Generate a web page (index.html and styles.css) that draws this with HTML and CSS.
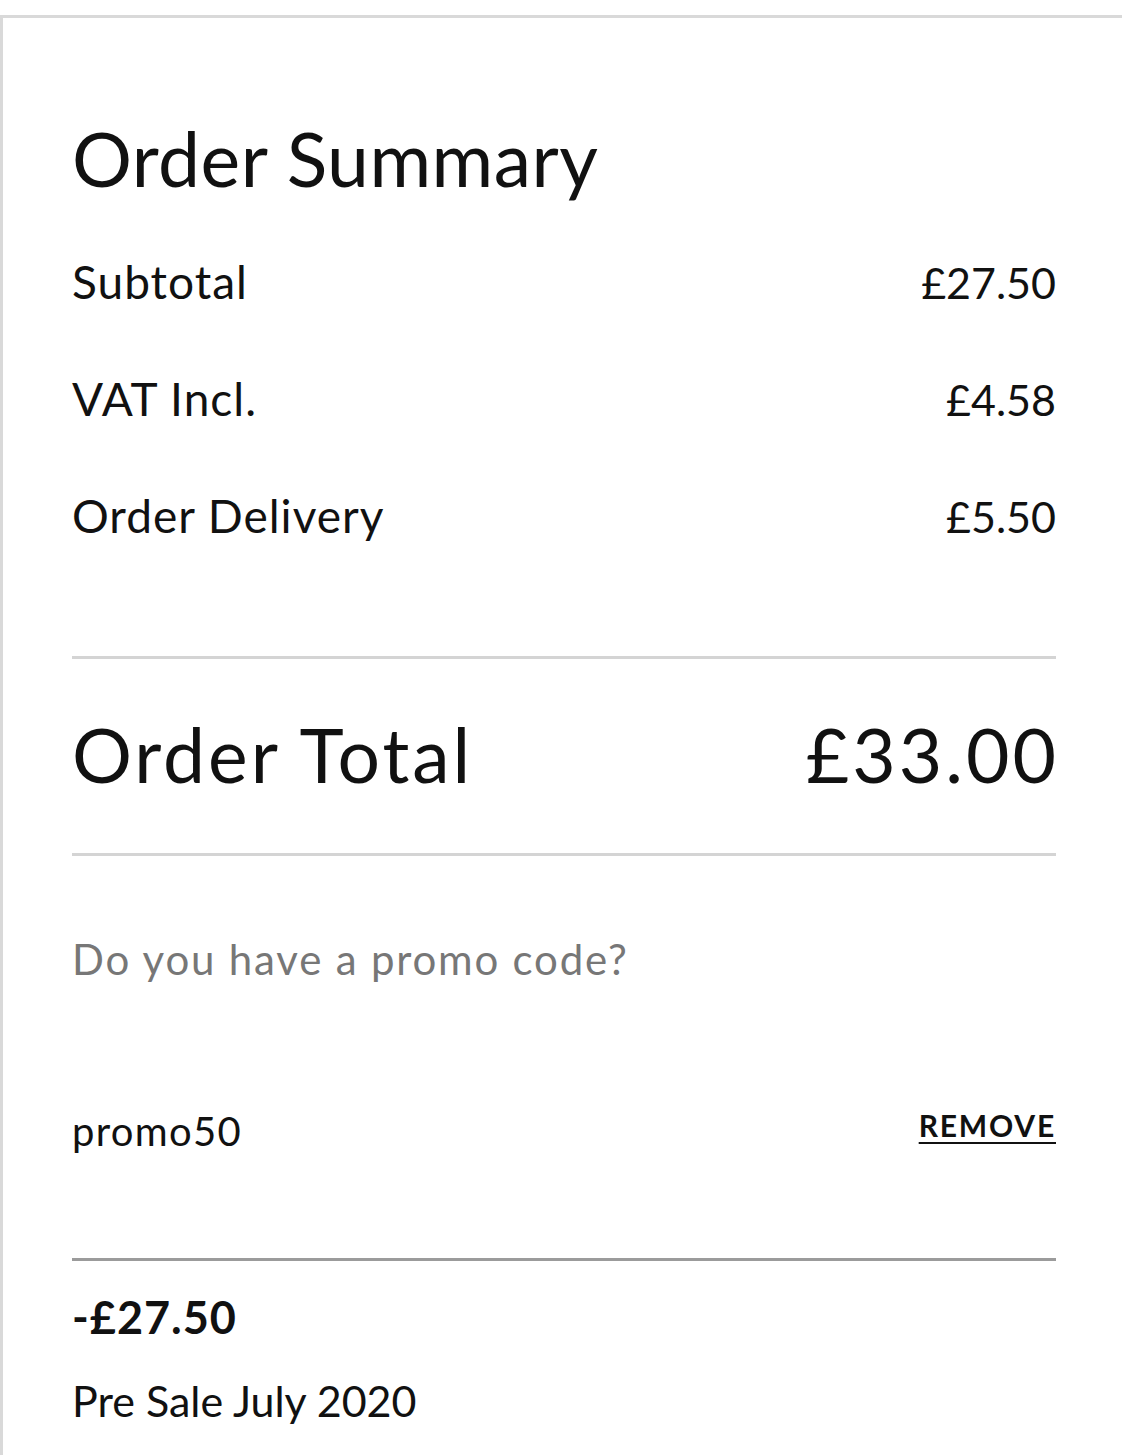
FILE: index.html
```html
<!DOCTYPE html>
<html lang="en">
<head>
    <meta charset="UTF-8">
    <meta name="viewport" content="width=device-width, initial-scale=1.0">
    <title>Order Summary</title>
    <link rel="stylesheet" href="styles.css">
</head>
<body>
    <div class="page">
        <div class="summary">
            <h1 class="summary-title">Order Summary</h1>

            <div class="lines">
                <div class="line">
                    <span class="line-label">Subtotal</span>
                    <span class="line-value">£27.50</span>
                </div>
                <div class="line">
                    <span class="line-label">VAT Incl.</span>
                    <span class="line-value">£4.58</span>
                </div>
                <div class="line">
                    <span class="line-label">Order Delivery</span>
                    <span class="line-value">£5.50</span>
                </div>
            </div>

            <hr class="rule">

            <div class="total">
                <span>Order Total</span>
                <span>£33.00</span>
            </div>

            <hr class="rule">

            <div class="promo-question">Do you have a promo code?</div>

            <div class="promo-applied">
                <span class="promo-code">promo50</span>
                <a href="#" class="promo-remove">Remove</a>
            </div>

            <hr class="rule rule-dark">

            <div class="discount">-£27.50</div>
            <div class="discount-note">Pre Sale July 2020</div>
        </div>
    </div>
</body>
</html>
```

FILE: styles.css
```css
* {
    margin: 0;
    padding: 0;
    box-sizing: border-box;
}

body {
    font-family: Lato, 'Open Sans', sans-serif;
    background: #ffffff;
    color: #111111;
}

.page {
    padding-top: 15px;
}

.summary {
    width: 1122px;
    min-height: 1440px;
    border-top: 3px solid #d9d9d9;
    border-left: 3px solid #d9d9d9;
    padding: 95px 66px 0 69px;
}

.summary-title {
    font-size: 75px;
    font-weight: 400;
    line-height: 90px;
    letter-spacing: 0.5px;
}

.lines {
    margin-top: 20px;
}

.line {
    display: flex;
    justify-content: space-between;
    align-items: baseline;
    height: 117px;
    line-height: 117px;
}

.line-label {
    font-size: 46px;
    letter-spacing: 1px;
}

.line-value {
    font-size: 43px;
}

.rule {
    border: none;
    height: 3px;
    background: #d4d4d4;
}

.lines + .rule {
    margin-top: 82px;
}

.total {
    display: flex;
    justify-content: space-between;
    font-size: 75px;
    line-height: 90px;
    letter-spacing: 3px;
    margin: 50px -3px 54px 0;
}

.promo-question {
    color: #777777;
    font-size: 42px;
    line-height: 50px;
    letter-spacing: 1.8px;
    margin-top: 78px;
}

.promo-applied {
    display: flex;
    justify-content: space-between;
    align-items: center;
    margin-top: 120px;
    height: 54px;
}

.promo-code {
    font-size: 40px;
    letter-spacing: 1.3px;
}

.promo-remove {
    color: #111111;
    font-size: 30px;
    font-weight: 700;
    letter-spacing: 1.8px;
    margin-bottom: 12px;
    text-transform: uppercase;
    text-decoration-thickness: 2px;
    text-underline-offset: 5px;
}

.rule-dark {
    background: #9b9b9b;
    margin-top: 100px;
}

.discount {
    font-size: 45px;
    font-weight: 700;
    line-height: 52px;
    letter-spacing: 1px;
    margin-top: 30px;
}

.discount-note {
    font-size: 43px;
    line-height: 52px;
    margin-top: 32px;
}
```
